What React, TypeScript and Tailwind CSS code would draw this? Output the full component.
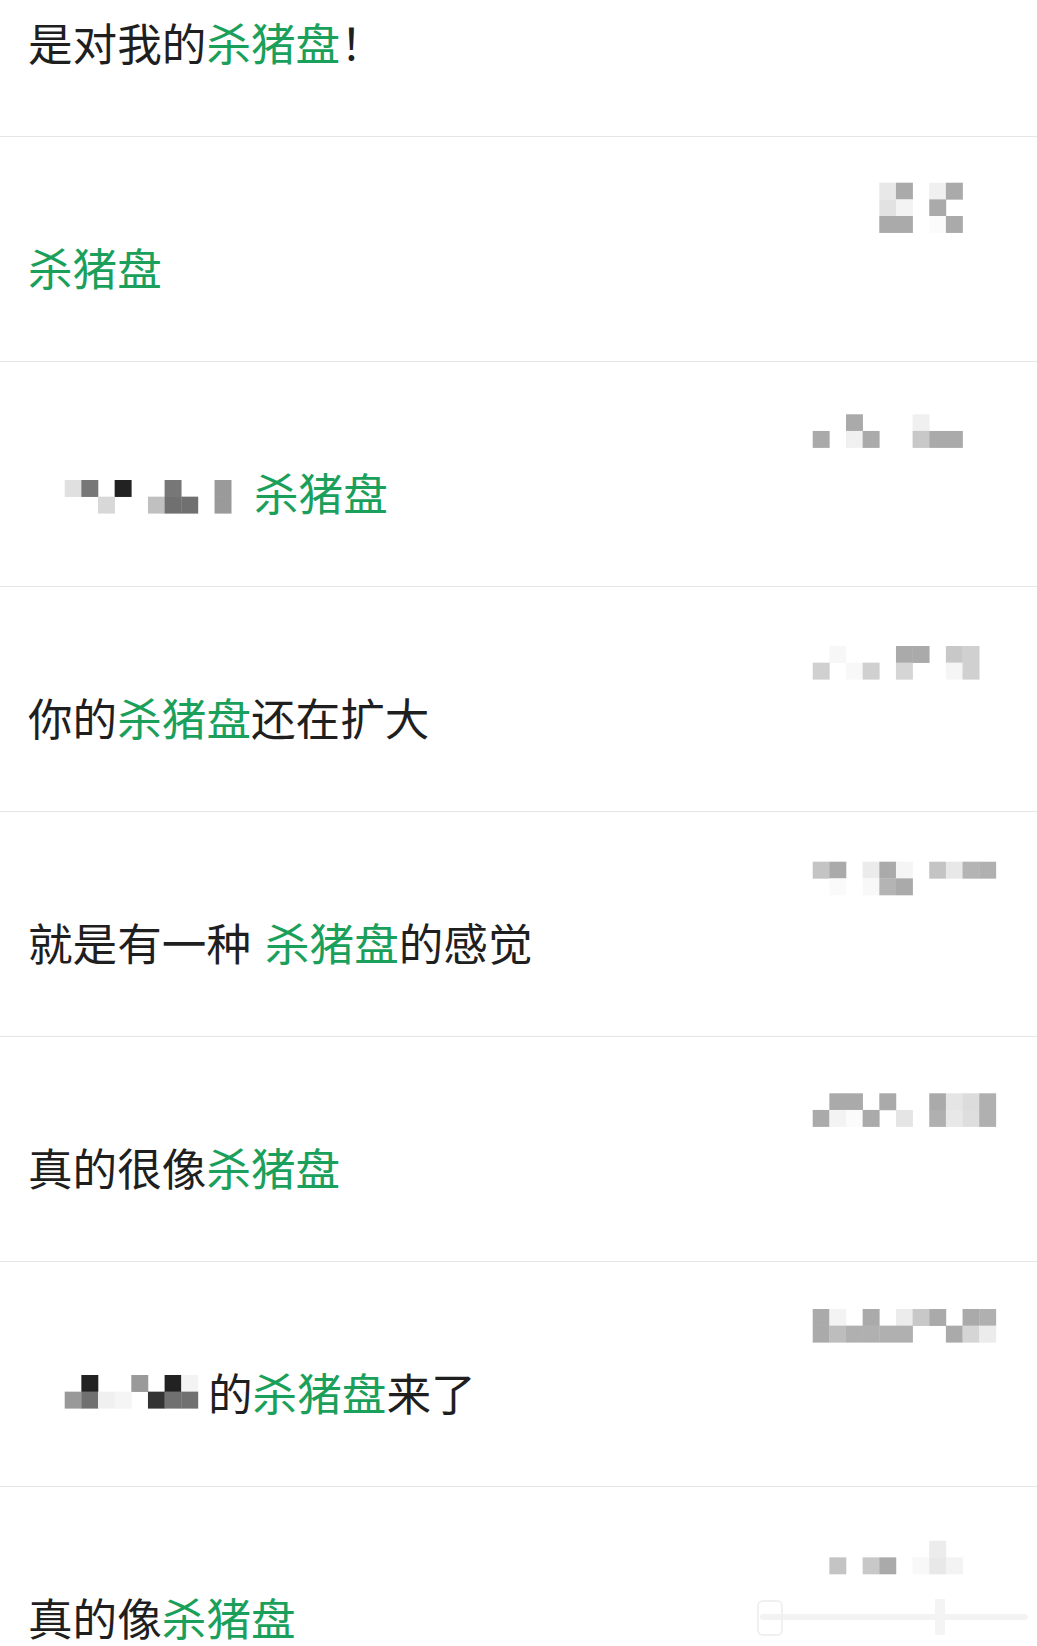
import React from "react"

// pixelated name blocks: "col:hex" pairs per block row
type Mosaic = { y0: number; rows: string[] }

type Row = {
  parts: [string, boolean?, string?][]
  name?: Mosaic
  lead?: Mosaic & { width: number }
  smudge?: boolean
}

const BLOCK = 16.65
const NAME_X = 812.7
const LEAD_X = 66.7

const rows: Row[] = [
  { parts: [["是对我的"], ["杀猪盘", true], ["！"]] },
  {
    parts: [["杀猪盘", true]],
    name: {
      y0: 45.7,
      rows: [
        "4:e8e8e8 5:aaaaaa 7:f0f0f0 8:aaaaaa",
        "4:e2e2e2 5:f3f3f3 7:aaaaaa",
        "4:aaaaaa 5:aaaaaa 7:fbfbfb 8:aaaaaa",
      ],
    },
  },
  {
    parts: [["杀猪盘", true]],
    name: {
      y0: 52.3,
      rows: ["2:aaaaaa 6:f0f0f0", "0:aaaaaa 2:f0f0f0 3:aaaaaa 6:c8c8c8 7:aaaaaa 8:aaaaaa"],
    },
    lead: {
      width: 226,
      y0: 10,
      rows: [
        "0:e0e0e0 1:777777 3:222222 6:777777 9:9a9a9a",
        "2:d8d8d8 5:c0c0c0 6:707070 7:707070 9:9a9a9a",
      ],
    },
  },
  {
    parts: [["你的"], ["杀猪盘", true], ["还在扩大"]],
    name: {
      y0: 59,
      rows: [
        "1:f7f7f7 5:aaaaaa 6:aaaaaa 8:c8c8c8 9:d0d0d0",
        "0:d0d0d0 2:f8f8f8 3:d0d0d0 5:d5d5d5 8:f5f5f5 9:d0d0d0",
      ],
    },
  },
  {
    parts: [["就是有一种 "], ["杀猪盘", true, "ml-[4px]"], ["的感觉"]],
    name: {
      y0: 49.7,
      rows: [
        "0:c4c4c4 1:aaaaaa 3:ebebeb 4:aaaaaa 5:f5f5f5 7:c4c4c4 8:e8e8e8 9:b4b4b4 10:b0b0b0",
        "1:fafafa 3:f8f8f8 4:b4b4b4 5:aaaaaa",
      ],
    },
  },
  {
    parts: [["真的很像"], ["杀猪盘", true]],
    name: {
      y0: 56.3,
      rows: [
        "1:aaaaaa 2:aaaaaa 4:aaaaaa 7:aaaaaa 8:e5e5e5 9:dcdcdc 10:b0b0b0",
        "0:aaaaaa 1:f3f3f3 2:fbfbfb 3:aaaaaa 5:e5e5e5 7:b0b0b0 8:e8e8e8 9:dedede 10:b0b0b0",
      ],
    },
  },
  {
    parts: [["的"], ["杀猪盘", true], ["来了"]],
    name: {
      y0: 47,
      rows: [
        "0:aaaaaa 1:f3f3f3 3:aaaaaa 5:ececec 6:c8c8c8 7:aaaaaa 9:aaaaaa 10:b0b0b0",
        "0:aaaaaa 1:bdbdbd 2:b0b0b0 3:b0b0b0 4:b0b0b0 5:b0b0b0 8:aaaaaa 9:d5d5d5 10:ececec",
      ],
    },
    lead: {
      width: 180,
      y0: 5,
      rows: [
        "1:222222 4:9a9a9a 6:222222 7:f3f3f3",
        "0:999999 1:707070 2:f0f0f0 3:f5f5f5 5:333333 6:707070 7:707070",
      ],
    },
  },
  {
    parts: [["真的像"], ["杀猪盘", true]],
    name: {
      y0: 53.7,
      rows: ["7:ececec", "1:c4c4c4 3:c8c8c8 4:aaaaaa 6:f8f8f8 7:e8e8e8 8:f3f3f3"],
    },
    smudge: true,
  },
]

const Blocks: React.FC<{ m: Mosaic; x: number }> = ({ m, x }) => (
  <>
    {m.rows.map((r, ri) =>
      r.split(" ").map((cell) => {
        const [c, hex] = cell.split(":")
        return (
          <rect
            key={`${ri}-${c}`}
            x={x + Number(c) * BLOCK}
            y={m.y0 + ri * BLOCK}
            width={BLOCK + 0.3}
            height={BLOCK + 0.3}
            fill={`#${hex}`}
          />
        )
      })
    )}
  </>
)

const App: React.FC = () => (
  <div
    className="h-screen overflow-hidden bg-white text-[#1f1f1f]"
    style={{ fontFamily: '"Noto Sans CJK SC", "Noto Sans", sans-serif' }}
  >
    <div className="-mt-[88px] flex flex-col">
      {rows.map((row, i) => (
        <div key={i} className="flex h-[225px] shrink-0 flex-col border-b border-[#e6e6e6]">
          <div className="flex h-[108px] justify-end">
            {row.name && (
              <svg width={277} height={100} viewBox="760 0 277 100">
                <Blocks m={row.name} x={NAME_X} />
              </svg>
            )}
          </div>
          <div className="flex h-[44px] items-start justify-between pl-[28px]">
            <div className="flex items-start whitespace-pre text-[44.6px] leading-[44px]">
              {row.lead && (
                <svg width={row.lead.width} height={44} viewBox={`30 0 ${row.lead.width} 44`}>
                  <Blocks m={row.lead} x={LEAD_X} />
                </svg>
              )}
              {row.parts.map(([t, green, extra], j) => (
                <span key={j} className={`${green ? "text-[#1aa05a]" : ""} ${extra ?? ""}`}>
                  {t}
                </span>
              ))}
            </div>
            {row.smudge && (
              <svg width={280} height={44} viewBox="757 0 280 44">
                <rect x={760} y={19} width={268} height={6} rx={3} fill="#f3f3f3" />
                <rect x={758} y={6} width={24} height={34} rx={5} fill="none" stroke="#f0f0f0" strokeWidth={2} />
                <rect x={935} y={4} width={10} height={36} fill="#f4f4f4" />
              </svg>
            )}
          </div>
        </div>
      ))}
    </div>
  </div>
)

export default App
